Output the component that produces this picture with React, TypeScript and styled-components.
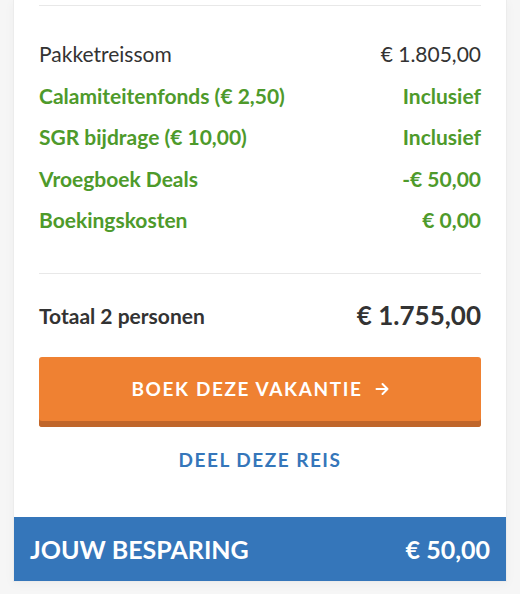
import styled, { createGlobalStyle } from "styled-components"

const GlobalStyle = createGlobalStyle`
    html, body {
        margin: 0;
        padding: 0;
        background: #f6f6f6;
        font-family: Lato, "Open Sans", sans-serif;
    }
`

const Page = styled.div`
    padding: 0 13px 13px;
    height: 594px;
    box-sizing: border-box;
    overflow: hidden;
`

const Card = styled.section`
    background: #fff;
    border: 1px solid #ececec;
    border-top: none;
    box-shadow: 0 2px 10px rgba(0, 0, 0, 0.04);
    display: flex;
    flex-direction: column;
`

const Body = styled.div`
    padding: 5px 25px 0;
`

const Divider = styled.hr`
    border: none;
    border-top: 1px solid #e8e8e8;
    margin: 0;
`

const Rows = styled.div`
    padding: 27px 0 32px;
`

const Row = styled.div<{ $tone?: "green" }>`
    display: flex;
    justify-content: space-between;
    align-items: center;
    height: 41.5px;
    font-size: 21px;
    font-weight: ${p => (p.$tone === "green" ? 700 : 400)};
    color: ${p => (p.$tone === "green" ? "#4e9a2b" : "#333")};
`

const TotalRow = styled.div`
    display: flex;
    justify-content: space-between;
    align-items: center;
    height: 83px;
    color: #333;
`

const TotalLabel = styled.span`
    font-size: 21px;
    font-weight: 700;
`

const TotalAmount = styled.span`
    font-size: 26px;
    font-weight: 700;
`

const BookButton = styled.button`
    display: flex;
    align-items: center;
    justify-content: center;
    gap: 12px;
    width: 100%;
    height: 70px;
    border: none;
    border-radius: 3px;
    background: #ef8132;
    box-shadow: inset 0 -6px 0 #c0662a;
    color: #fff;
    font-family: inherit;
    font-size: 19px;
    font-weight: 700;
    letter-spacing: 1.6px;
    padding: 0 0 6px;
    cursor: pointer;
`

const ShareLink = styled.a`
    display: block;
    text-align: center;
    color: #3576ba;
    font-size: 19px;
    font-weight: 700;
    letter-spacing: 1.5px;
    padding: 21px 0 46px;
    text-decoration: none;
`

const SavingsBar = styled.div`
    display: flex;
    justify-content: space-between;
    align-items: center;
    height: 64px;
    padding: 0 16px 0 16px;
    background: #3576ba;
    color: #fff;
    font-size: 25px;
    font-weight: 700;
`

const Arrow = () => (
    <svg width="14" height="14" viewBox="0 0 14 14" fill="none" stroke="#fff" strokeWidth="2" strokeLinecap="round" strokeLinejoin="round">
        <path d="M1.5 7h11M7.5 2l5 5-5 5" />
    </svg>
)

const lines = [
    { label: "Pakketreissom", value: "€ 1.805,00" },
    { label: "Calamiteitenfonds (€ 2,50)", value: "Inclusief", green: true },
    { label: "SGR bijdrage (€ 10,00)", value: "Inclusief", green: true },
    { label: "Vroegboek Deals", value: "-€ 50,00", green: true },
    { label: "Boekingskosten", value: "€ 0,00", green: true },
]

export default function App() {
    return (
        <>
            <GlobalStyle />
            <Page>
                <Card>
                    <Body>
                        <Divider />
                        <Rows>
                            {lines.map(line => (
                                <Row key={line.label} $tone={line.green ? "green" : undefined}>
                                    <span>{line.label}</span>
                                    <span>{line.value}</span>
                                </Row>
                            ))}
                        </Rows>
                        <Divider />
                        <TotalRow>
                            <TotalLabel>Totaal 2 personen</TotalLabel>
                            <TotalAmount>€ 1.755,00</TotalAmount>
                        </TotalRow>
                        <BookButton>
                            BOEK DEZE VAKANTIE <Arrow />
                        </BookButton>
                        <ShareLink href="#">DEEL DEZE REIS</ShareLink>
                    </Body>
                    <SavingsBar>
                        <span>JOUW BESPARING</span>
                        <span>€ 50,00</span>
                    </SavingsBar>
                </Card>
            </Page>
        </>
    )
}
